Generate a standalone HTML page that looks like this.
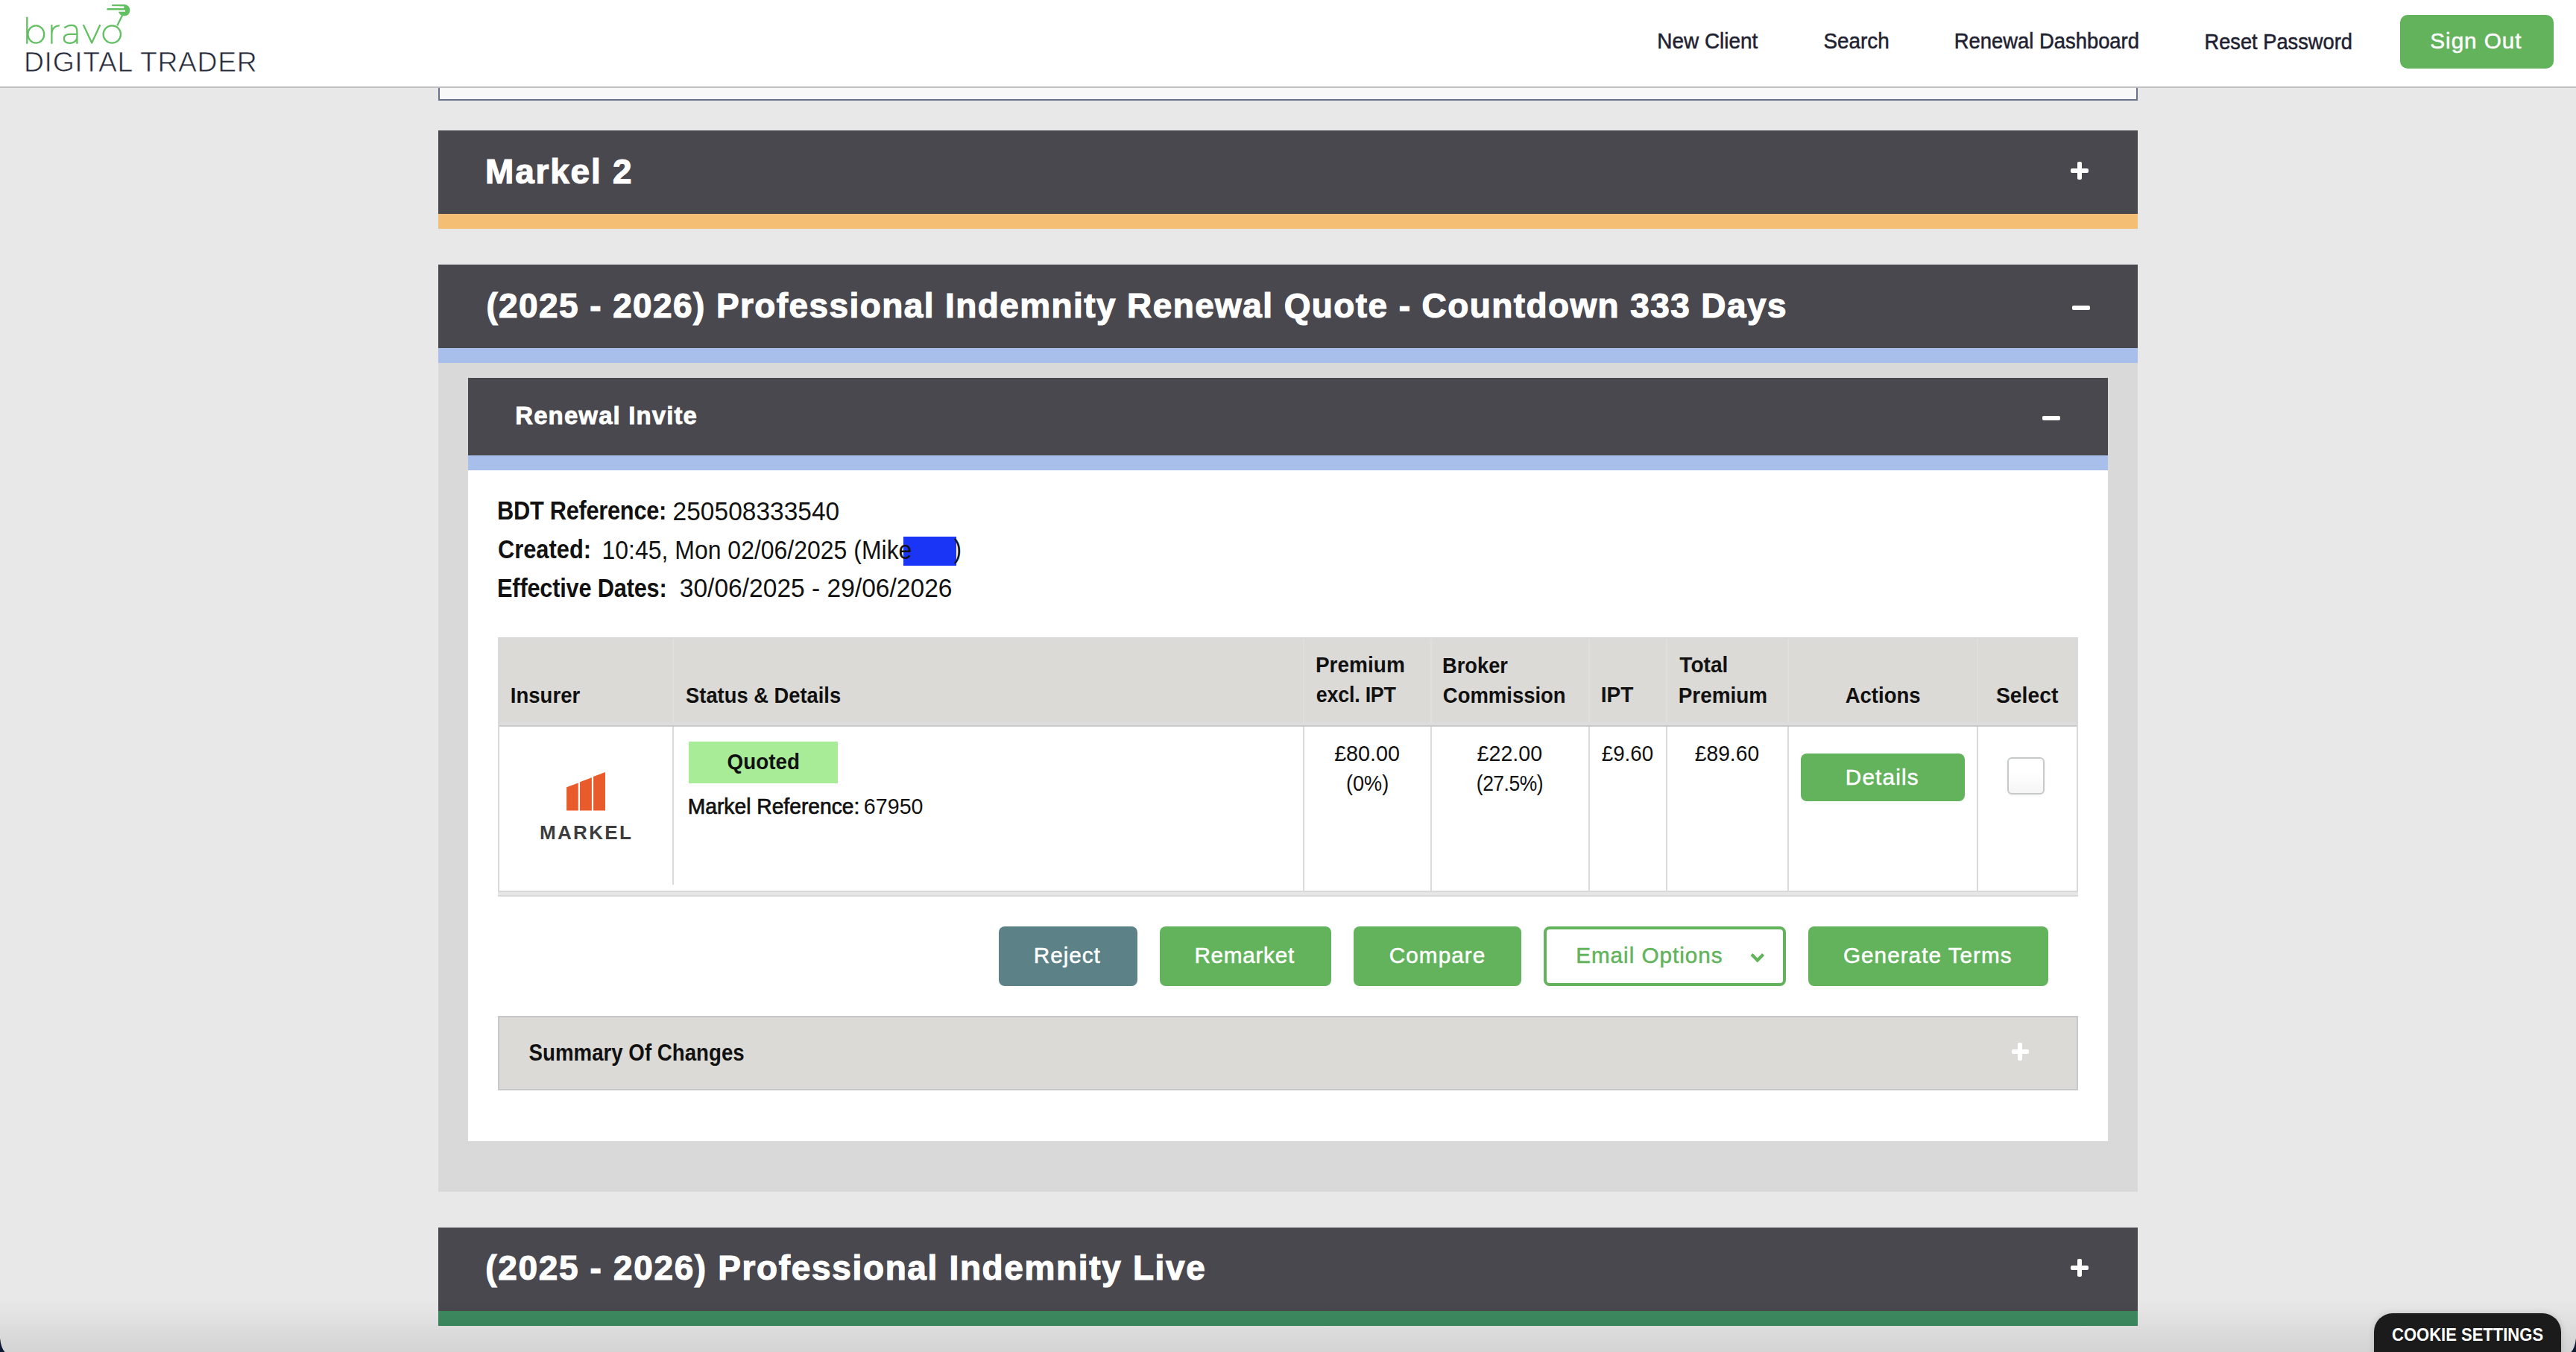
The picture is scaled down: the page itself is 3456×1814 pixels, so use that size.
<!DOCTYPE html>
<html><head><meta charset="utf-8"><title>Bravo Digital Trader</title>
<style>
html,body{margin:0;padding:0;}
body{width:3456px;height:1814px;overflow:hidden;position:relative;background:#e8e8e8;font-family:"Liberation Sans",sans-serif;}
.b{position:absolute;box-sizing:border-box;}
.t{position:absolute;white-space:pre;font-family:"Liberation Sans",sans-serif;}
.dk{background:#49484f;}
.ic{position:absolute;background:#fff;border-radius:2px;}
</style></head><body>
<!-- header -->
<div class="b" style="left:0;top:0;width:3456px;height:116px;background:#fff;"></div>
<div class="b" style="left:0;top:116px;width:3456px;height:2px;background:#c0c0c0;"></div>
<svg class="b" style="left:0;top:0;" width="200" height="70" viewBox="0 0 200 70">
 <g fill="none" stroke="#62bf62" stroke-width="2.3" stroke-linecap="butt" stroke-linejoin="round">
  <line x1="36.3" y1="22.7" x2="36.3" y2="58.8"/>
  <ellipse cx="48.3" cy="46.0" rx="10.9" ry="11.7"/>
  <line x1="69.4" y1="33.2" x2="69.4" y2="58.8"/>
  <path d="M69.4 43 Q71.5 34.6 79.8 34.4"/>
  <path d="M86.2 37.4 Q91 33.8 96 33.8 Q103.4 33.8 103.4 42 L103.4 58.8"/>
  <path d="M103.4 45.8 L93.5 45.8 Q85.9 45.8 85.9 51.8 Q85.9 57.8 93.5 57.8 Q101 57.8 103.4 51.5"/>
  <path d="M111.8 33.2 L123.2 57.6 L134.4 33.2"/>
  <circle cx="150.3" cy="46.0" r="11.7"/>
  <line x1="157.2" y1="34.6" x2="164.6" y2="19.6"/>
 </g>
 <g fill="#62bf62">
  <circle cx="166.6" cy="13.8" r="7.8"/>
  <rect x="150" y="6.0" width="18" height="2.4" rx="1.1"/>
  <rect x="143.3" y="11.0" width="24" height="2.6" rx="1.2"/>
 </g>
 <g fill="#ffffff">
  <rect x="149" y="8.4" width="17.3" height="2.6"/>
  <rect x="158" y="13.6" width="10" height="2.1"/>
 </g>
</svg>
<div class="b" style="left:3220px;top:20px;width:206px;height:72px;background:#62b35c;border-radius:10px;"></div>

<!-- top box remnant -->
<div class="b" style="left:588px;top:118px;width:2280px;height:17px;background:#f8f8f8;border:2px solid #67728d;border-top:none;box-shadow:inset 1px -1px 0 #fff, inset -1px 0 0 #fff;"></div>

<!-- section 1 -->
<div class="b dk" style="left:588px;top:175px;width:2280px;height:112px;"></div>
<div class="b" style="left:588px;top:287px;width:2280px;height:20px;background:#f4bf74;"></div>
<div class="ic" style="left:2778.4px;top:226px;width:23.8px;height:6.2px;"></div>
<div class="ic" style="left:2787.1px;top:217.1px;width:6.4px;height:23.7px;"></div>

<!-- section 2 -->
<div class="b dk" style="left:588px;top:355px;width:2280px;height:112px;"></div>
<div class="b" style="left:588px;top:467px;width:2280px;height:20px;background:#a8bfec;"></div>
<div class="ic" style="left:2779.9px;top:409.7px;width:23.8px;height:6.5px;"></div>
<div class="b" style="left:588px;top:487px;width:2280px;height:1112px;background:#d9d9d9;"></div>

<!-- inner panel -->
<div class="b dk" style="left:628px;top:507px;width:2200px;height:104px;"></div>
<div class="b" style="left:628px;top:611px;width:2200px;height:20px;background:#a8bfec;"></div>
<div class="ic" style="left:2739.9px;top:557.7px;width:23.8px;height:6.5px;"></div>
<div class="b" style="left:628px;top:631px;width:2200px;height:900px;background:#ffffff;"></div>

<!-- redaction box -->
<div class="b" style="left:1212.3px;top:719.7px;width:70.8px;height:39.8px;background:#1a35f6;"></div>

<!-- table -->
<div class="b" style="left:668px;top:855px;width:2120px;height:348px;background:#fff;border:2px solid #d9d9d9;border-bottom:none;"></div>
<div class="b" style="left:670px;top:857px;width:2116px;height:112px;background:#dbdad6;"></div>
<div class="b" style="left:670px;top:969px;width:2116px;height:4px;background:#dddddd;"></div>
<div class="b" style="left:670px;top:973px;width:2116px;height:2px;background:#c9c9c9;"></div>
<div class="b" style="left:668px;top:1195px;width:2120px;height:2px;background:#d9d9d9;"></div>
<div class="b" style="left:668px;top:1197px;width:2120px;height:4px;background:#e6e6e6;"></div>
<div class="b" style="left:668px;top:1201px;width:2120px;height:2px;background:#d9d9d9;"></div>
<!-- column dividers header -->
<div class="b" style="left:902px;top:857px;width:2px;height:112px;background:#dfdfdd;"></div>
<div class="b" style="left:1748px;top:857px;width:2px;height:112px;background:#dfdfdd;"></div>
<div class="b" style="left:1919px;top:857px;width:2px;height:112px;background:#dfdfdd;"></div>
<div class="b" style="left:2131px;top:857px;width:2px;height:112px;background:#dfdfdd;"></div>
<div class="b" style="left:2235px;top:857px;width:2px;height:112px;background:#dfdfdd;"></div>
<div class="b" style="left:2398px;top:857px;width:2px;height:112px;background:#dfdfdd;"></div>
<div class="b" style="left:2652px;top:857px;width:2px;height:112px;background:#dfdfdd;"></div>
<!-- column dividers body -->
<div class="b" style="left:902px;top:975px;width:2px;height:212px;background:#dadada;"></div>
<div class="b" style="left:1748px;top:975px;width:2px;height:220px;background:#dadada;"></div>
<div class="b" style="left:1919px;top:975px;width:2px;height:220px;background:#dadada;"></div>
<div class="b" style="left:2131px;top:975px;width:2px;height:220px;background:#dadada;"></div>
<div class="b" style="left:2235px;top:975px;width:2px;height:220px;background:#dadada;"></div>
<div class="b" style="left:2398px;top:975px;width:2px;height:220px;background:#dadada;"></div>
<div class="b" style="left:2652px;top:975px;width:2px;height:220px;background:#dadada;"></div>

<!-- markel logo -->
<svg class="b" style="left:740px;top:1030px;" width="80" height="64" viewBox="740 1030 80 64">
 <g fill="#e95b2a">
  <polygon points="760.1,1056.3 775.8,1050.6 775.8,1087.6 760.1,1087.6"/>
  <polygon points="778.0,1049.2 793.9,1043.3 793.9,1087.6 778.0,1087.6"/>
  <polygon points="796.1,1042.1 812.0,1036.0 812.0,1087.6 796.1,1087.6"/>
 </g>
</svg>
<!-- quoted badge -->
<div class="b" style="left:924px;top:995px;width:200px;height:56px;background:#a8ec98;"></div>
<!-- details button -->
<div class="b" style="left:2416px;top:1011px;width:220px;height:64px;background:#62b35c;border-radius:8px;"></div>
<!-- checkbox -->
<div class="b" style="left:2693px;top:1016px;width:50px;height:50px;border:2px solid #c5c9ca;border-radius:6px;background:linear-gradient(#ffffff 40%,#f5f5f5);box-shadow:0 1px 4px rgba(0,0,0,0.05);"></div>

<!-- action buttons -->
<div class="b" style="left:1340px;top:1243px;width:186px;height:80px;background:#5c8187;border-radius:8px;"></div>
<div class="b" style="left:1556px;top:1243px;width:230px;height:80px;background:#62b35c;border-radius:8px;"></div>
<div class="b" style="left:1816px;top:1243px;width:225px;height:80px;background:#62b35c;border-radius:8px;"></div>
<div class="b" style="left:2071px;top:1243px;width:325px;height:80px;background:#fff;border:4px solid #62b35c;border-radius:8px;"></div>
<svg class="b" style="left:2340px;top:1270px;" width="36" height="30" viewBox="2340 1270 36 30">
 <path d="M2350 1280.5 L2357.8 1288.5 L2365.6 1280.5" fill="none" stroke="#62b35c" stroke-width="4.2" stroke-linecap="butt" stroke-linejoin="miter"/>
</svg>
<div class="b" style="left:2426px;top:1243px;width:322px;height:80px;background:#62b35c;border-radius:8px;"></div>

<!-- summary of changes -->
<div class="b" style="left:668px;top:1363px;width:2120px;height:100px;background:#dbdad6;border:2px solid #c7c7c9;"></div>
<div class="ic" style="left:2698.5px;top:1408px;width:23.6px;height:6.2px;"></div>
<div class="ic" style="left:2707.1px;top:1399px;width:6.4px;height:23.8px;"></div>

<!-- section 3 -->
<div class="b dk" style="left:588px;top:1647px;width:2280px;height:112px;"></div>
<div class="b" style="left:588px;top:1759px;width:2280px;height:20px;background:#3d8a5f;"></div>
<div class="ic" style="left:2778.4px;top:1698px;width:23.8px;height:6.2px;"></div>
<div class="ic" style="left:2787.1px;top:1689.1px;width:6.4px;height:23.7px;"></div>

<!-- bottom shadow -->
<div class="b" style="left:0;top:1744px;width:3456px;height:70px;background:linear-gradient(rgba(0,0,0,0),rgba(0,0,0,0.09));"></div>

<!-- cookie settings -->
<div class="b" style="left:3185px;top:1762px;width:251px;height:70px;background:#1b1b1b;border-radius:25px 25px 0 0;box-shadow:0 0 8px rgba(0,0,0,0.15);"></div>

<div class="t" style="left:2223.26px;top:41.89px;font-size:27.95px;line-height:27.95px;font-weight:normal;letter-spacing:0.000px;color:#1f2231;transform:scaleY(1.0475);transform-origin:0 23.66px;-webkit-text-stroke:0.5px #1f2231;">New Client</div>
<div class="t" style="left:2446.46px;top:41.99px;font-size:27.84px;line-height:27.84px;font-weight:normal;letter-spacing:0.000px;color:#1f2231;transform:scaleY(1.0517);transform-origin:0 23.56px;-webkit-text-stroke:0.5px #1f2231;">Search</div>
<div class="t" style="left:2621.66px;top:42.45px;font-size:27.41px;line-height:27.41px;font-weight:normal;letter-spacing:0.000px;color:#1f2231;transform:scaleY(1.0680);transform-origin:0 23.20px;-webkit-text-stroke:0.5px #1f2231;">Renewal Dashboard</div>
<div class="t" style="left:2957.47px;top:42.58px;font-size:27.25px;line-height:27.25px;font-weight:normal;letter-spacing:-0.000px;color:#1f2231;transform:scaleY(1.0741);transform-origin:0 23.07px;-webkit-text-stroke:0.5px #1f2231;">Reset Password</div>
<div class="t" style="left:3260.36px;top:40.30px;font-size:29.71px;line-height:29.71px;font-weight:normal;letter-spacing:0.944px;color:#ffffff;-webkit-text-stroke:0.5px #ffffff;">Sign Out</div>
<div class="t" style="left:32.01px;top:64.75px;font-size:37.39px;line-height:37.39px;font-weight:normal;letter-spacing:0.625px;color:#262a38;-webkit-text-stroke:0.7px #fff;">DIGITAL TRADER</div>
<div class="t" style="left:651.08px;top:207.51px;font-size:45.94px;line-height:45.94px;font-weight:bold;letter-spacing:1.812px;color:#ffffff;-webkit-text-stroke:1.2px #fff;">Markel 2</div>
<div class="t" style="left:652.40px;top:387.51px;font-size:45.94px;line-height:45.94px;font-weight:bold;letter-spacing:1.430px;color:#ffffff;-webkit-text-stroke:1.2px #fff;">(2025 - 2026) Professional Indemnity Renewal Quote - Countdown 333 Days</div>
<div class="t" style="left:691.19px;top:541.43px;font-size:33.04px;line-height:33.04px;font-weight:bold;letter-spacing:1.099px;color:#ffffff;-webkit-text-stroke:0.8px #fff;">Renewal Invite</div>
<div class="t" style="left:667.05px;top:671.84px;font-size:30.78px;line-height:30.78px;font-weight:bold;letter-spacing:-0.273px;color:#111111;transform:scaleY(1.1111);transform-origin:0 26.06px;">BDT Reference:</div>
<div class="t" style="left:902.62px;top:669.53px;font-size:33.51px;line-height:33.51px;font-weight:normal;letter-spacing:0.000px;color:#111111;transform:scaleY(1.0207);transform-origin:0 28.37px;">250508333540</div>
<div class="t" style="left:667.97px;top:724.11px;font-size:30.82px;line-height:30.82px;font-weight:bold;letter-spacing:-0.000px;color:#111111;transform:scaleY(1.1099);transform-origin:0 26.09px;">Created:</div>
<div class="t" style="left:807.54px;top:723.13px;font-size:31.98px;line-height:31.98px;font-weight:normal;letter-spacing:0.000px;color:#111111;transform:scaleY(1.0695);transform-origin:0 27.07px;">10:45, Mon 02/06/2025 (Mike</div>
<div class="t" style="left:1279.69px;top:724.14px;font-size:30.78px;line-height:30.78px;font-weight:normal;letter-spacing:-0.103px;color:#111111;transform:scaleY(1.1111);transform-origin:0 26.06px;">)</div>
<div class="t" style="left:667.05px;top:775.64px;font-size:30.78px;line-height:30.78px;font-weight:bold;letter-spacing:-0.210px;color:#111111;transform:scaleY(1.1111);transform-origin:0 26.06px;">Effective Dates:</div>
<div class="t" style="left:911.76px;top:773.28px;font-size:33.57px;line-height:33.57px;font-weight:normal;letter-spacing:0.000px;color:#111111;transform:scaleY(1.0188);transform-origin:0 28.42px;">30/06/2025 - 29/06/2026</div>
<div class="t" style="left:684.87px;top:919.71px;font-size:27.52px;line-height:27.52px;font-weight:bold;letter-spacing:0.000px;color:#111111;transform:scaleY(1.0850);transform-origin:0 23.29px;">Insurer</div>
<div class="t" style="left:920.08px;top:919.86px;font-size:27.33px;line-height:27.33px;font-weight:bold;letter-spacing:0.000px;color:#111111;transform:scaleY(1.0922);transform-origin:0 23.14px;">Status &amp; Details</div>
<div class="t" style="left:1764.94px;top:879.48px;font-size:28.02px;line-height:28.02px;font-weight:bold;letter-spacing:-0.000px;color:#111111;transform:scaleY(1.0653);transform-origin:0 23.72px;">Premium</div>
<div class="t" style="left:1765.83px;top:920.45px;font-size:26.87px;line-height:26.87px;font-weight:bold;letter-spacing:-0.231px;color:#111111;transform:scaleY(1.1111);transform-origin:0 22.75px;">excl. IPT</div>
<div class="t" style="left:1934.99px;top:880.10px;font-size:27.29px;line-height:27.29px;font-weight:bold;letter-spacing:0.000px;color:#111111;transform:scaleY(1.0939);transform-origin:0 23.10px;">Broker</div>
<div class="t" style="left:1935.80px;top:919.94px;font-size:27.47px;line-height:27.47px;font-weight:bold;letter-spacing:0.000px;color:#111111;transform:scaleY(1.0866);transform-origin:0 23.26px;">Commission</div>
<div class="t" style="left:2147.63px;top:919.41px;font-size:28.11px;line-height:28.11px;font-weight:bold;letter-spacing:0.000px;color:#111111;transform:scaleY(1.0622);transform-origin:0 23.79px;">IPT</div>
<div class="t" style="left:2253.32px;top:879.40px;font-size:28.12px;line-height:28.12px;font-weight:bold;letter-spacing:0.000px;color:#111111;transform:scaleY(1.0618);transform-origin:0 23.80px;">Total</div>
<div class="t" style="left:2251.64px;top:919.54px;font-size:27.95px;line-height:27.95px;font-weight:bold;letter-spacing:0.000px;color:#111111;transform:scaleY(1.0681);transform-origin:0 23.66px;">Premium</div>
<div class="t" style="left:2475.67px;top:919.87px;font-size:27.56px;line-height:27.56px;font-weight:bold;letter-spacing:0.000px;color:#111111;transform:scaleY(1.0835);transform-origin:0 23.33px;">Actions</div>
<div class="t" style="left:2677.95px;top:919.24px;font-size:28.31px;line-height:28.31px;font-weight:bold;letter-spacing:0.000px;color:#111111;transform:scaleY(1.0546);transform-origin:0 23.96px;">Select</div>
<div class="t" style="left:975.59px;top:1009.45px;font-size:27.82px;line-height:27.82px;font-weight:bold;letter-spacing:-0.000px;color:#111111;transform:scaleY(1.0576);transform-origin:0 23.55px;">Quoted</div>
<div class="t" style="left:922.69px;top:1068.35px;font-size:28.24px;line-height:28.24px;font-weight:normal;letter-spacing:0.000px;color:#111111;transform:scaleY(1.0214);transform-origin:0 23.90px;-webkit-text-stroke:0.7px #111111;">Markel Reference:</div>
<div class="t" style="left:1158.87px;top:1068.34px;font-size:28.66px;line-height:28.66px;font-weight:normal;letter-spacing:0.000px;color:#111111;transform:scaleY(1.0416);transform-origin:0 24.26px;">67950</div>
<div class="t" style="left:1790.14px;top:996.95px;font-size:28.76px;line-height:28.76px;font-weight:normal;letter-spacing:0.000px;color:#111111;transform:scaleY(1.0229);transform-origin:0 24.35px;">£80.00</div>
<div class="t" style="left:1805.97px;top:1038.43px;font-size:27.14px;line-height:27.14px;font-weight:normal;letter-spacing:0.000px;color:#111111;transform:scaleY(1.0842);transform-origin:0 22.97px;">(0%)</div>
<div class="t" style="left:1981.54px;top:997.04px;font-size:28.66px;line-height:28.66px;font-weight:normal;letter-spacing:0.000px;color:#111111;transform:scaleY(1.0264);transform-origin:0 24.26px;">£22.00</div>
<div class="t" style="left:1980.81px;top:1038.99px;font-size:26.48px;line-height:26.48px;font-weight:normal;letter-spacing:-0.483px;color:#111111;transform:scaleY(1.1111);transform-origin:0 22.41px;">(27.5%)</div>
<div class="t" style="left:2148.77px;top:997.82px;font-size:27.74px;line-height:27.74px;font-weight:normal;letter-spacing:0.000px;color:#111111;transform:scaleY(1.0607);transform-origin:0 23.48px;">£9.60</div>
<div class="t" style="left:2273.85px;top:997.43px;font-size:28.19px;line-height:28.19px;font-weight:normal;letter-spacing:0.000px;color:#111111;transform:scaleY(1.0435);transform-origin:0 23.87px;">£89.60</div>
<div class="t" style="left:2475.77px;top:1028.20px;font-size:29.71px;line-height:29.71px;font-weight:normal;letter-spacing:1.192px;color:#ffffff;-webkit-text-stroke:0.5px #ffffff;">Details</div>
<div class="t" style="left:723.97px;top:1103.52px;font-size:26.09px;line-height:26.09px;font-weight:bold;letter-spacing:2.271px;color:#3d3d3f;">MARKEL</div>
<div class="t" style="left:1386.87px;top:1267.30px;font-size:29.71px;line-height:29.71px;font-weight:normal;letter-spacing:0.959px;color:#ffffff;-webkit-text-stroke:0.5px #ffffff;">Reject</div>
<div class="t" style="left:1602.47px;top:1267.30px;font-size:29.71px;line-height:29.71px;font-weight:normal;letter-spacing:0.705px;color:#ffffff;-webkit-text-stroke:0.5px #ffffff;">Remarket</div>
<div class="t" style="left:1863.76px;top:1267.30px;font-size:29.71px;line-height:29.71px;font-weight:normal;letter-spacing:1.061px;color:#ffffff;-webkit-text-stroke:0.5px #ffffff;">Compare</div>
<div class="t" style="left:2114.17px;top:1267.30px;font-size:29.71px;line-height:29.71px;font-weight:normal;letter-spacing:0.956px;color:#62b35c;-webkit-text-stroke:0.5px #62b35c;">Email Options</div>
<div class="t" style="left:2472.96px;top:1267.30px;font-size:29.71px;line-height:29.71px;font-weight:normal;letter-spacing:1.019px;color:#ffffff;-webkit-text-stroke:0.5px #ffffff;">Generate Terms</div>
<div class="t" style="left:709.57px;top:1399.87px;font-size:27.68px;line-height:27.68px;font-weight:bold;letter-spacing:0.000px;color:#111111;transform:scaleY(1.0996);transform-origin:0 23.43px;">Summary Of Changes</div>
<div class="t" style="left:651.30px;top:1678.81px;font-size:45.94px;line-height:45.94px;font-weight:bold;letter-spacing:1.671px;color:#ffffff;-webkit-text-stroke:1.2px #fff;">(2025 - 2026) Professional Indemnity Live</div>
<div class="t" style="left:3209.02px;top:1781.36px;font-size:22.02px;line-height:22.02px;font-weight:bold;letter-spacing:0.000px;color:#ffffff;transform:scaleY(1.0529);transform-origin:0 18.64px;">COOKIE SETTINGS</div>

<!-- window corners -->
<svg class="b" style="left:0;top:1790px;" width="12" height="24" viewBox="0 1790 12 24"><path d="M0 1795.5 Q1.5 1809 6.5 1814 L0 1814 Z" fill="#0d1a33"/></svg>
<svg class="b" style="left:3444px;top:1790px;" width="12" height="24" viewBox="3444 1790 12 24"><path d="M3456 1795.5 Q3454.5 1809 3449.5 1814 L3456 1814 Z" fill="#0d1a33"/></svg>
</body></html>
